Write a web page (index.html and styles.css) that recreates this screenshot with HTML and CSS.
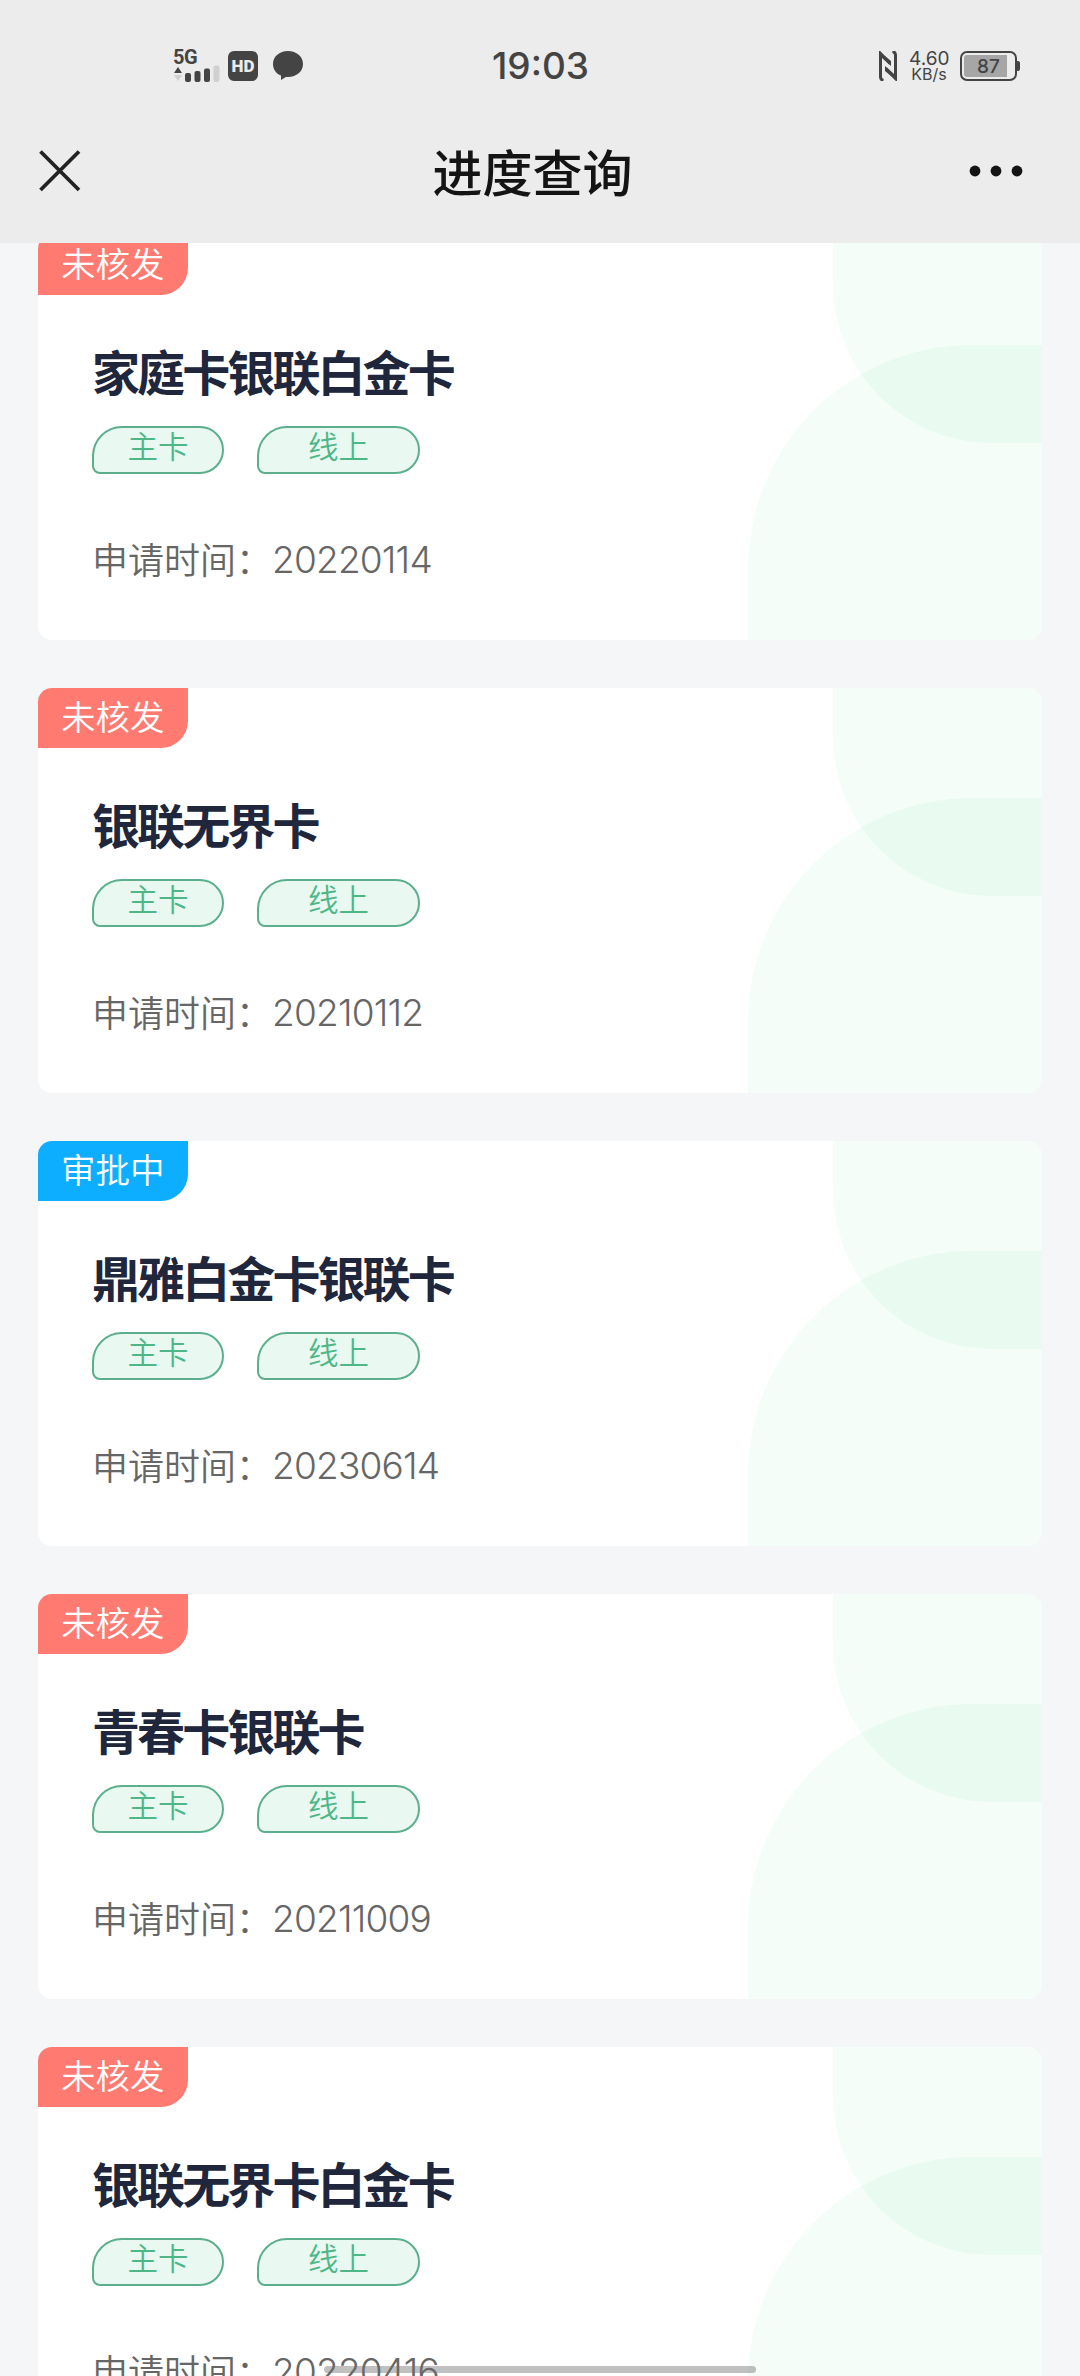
FILE: index.html
```html
<!DOCTYPE html>
<html lang="zh-CN">
<head>
<meta charset="utf-8">
<title>进度查询</title>
<link rel="stylesheet" href="styles.css">
</head>
<body>
<div class="screen">
  <header class="header">
    <div class="status">
      <div class="signal">
        <span class="net">5G</span>
        <svg width="48" height="18" viewBox="0 0 48 18">
          <path d="M1 8 5 2 9 8Z" fill="#444"/>
          <path d="M1 10 5 16 9 10Z" fill="#cfcfcf"/>
          <rect x="12" y="8" width="6" height="9" rx="2" fill="#444"/>
          <rect x="21.500" y="6" width="6" height="11" rx="2" fill="#444"/>
          <rect x="31" y="3.500" width="6" height="13.500" rx="2" fill="#444"/>
          <rect x="40.500" y="0.500" width="6" height="16.500" rx="2" fill="#d0d0d0"/>
        </svg>
      </div>
      <span class="hd">HD</span>
      <svg class="bubble" width="30" height="30" viewBox="0 0 30 30"><path d="M15 0C23.500 0 30 5.500 30 13S23.500 26 15 26C14 26 13.500 26 12.800 25.900L8 29V24.600C3 22.500 0 18.500 0 13 0 5.500 6.500 0 15 0Z" fill="#444"/></svg>
      <time class="clock">19:03</time>
      <svg class="nfc" width="18" height="30" viewBox="0 0 18 30"><path d="M4.500 29.500Q1.500 29 1.500 26V2.500L11 12.500M13.500.5Q16.500 1 16.500 4V27.500L7 17.500" fill="none" stroke="#444" stroke-width="3"/><path d="M0 0 12 10V15L3 7ZM18 30 6 20V15L15 23Z" fill="#444"/></svg>
      <div class="speed"><span class="rate">4.60</span><span class="unit">KB/s</span></div>
      <div class="battery"><div class="level"></div><span class="percent">87</span></div>
    </div>
    <nav class="nav">
      <svg width="42" height="42" viewBox="0 0 42 42"><path d="M1.500 1.500 40 40M40 1.500 1.500 40" stroke="#222" stroke-width="3.800"/></svg>
      <h1 class="title">进度查询</h1>
      <svg width="54" height="12" viewBox="0 0 54 12"><g fill="#141414"><circle cx="6" cy="6" r="5.400"/><circle cx="27" cy="6" r="5.400"/><circle cx="48" cy="6" r="5.400"/></g></svg>
    </nav>
  </header>
  <main class="list">
    <article class="card">
      <span class="badge">未核发</span>
      <h2 class="name">家庭卡银联白金卡</h2>
      <div class="tags"><span class="tag">主卡</span><span class="tag tag-wide">线上</span></div>
      <p class="date"><span class="label">申请时间：</span><span class="num">20220114</span></p>
    </article>
    <article class="card">
      <span class="badge">未核发</span>
      <h2 class="name">银联无界卡</h2>
      <div class="tags"><span class="tag">主卡</span><span class="tag tag-wide">线上</span></div>
      <p class="date"><span class="label">申请时间：</span><span class="num">20210112</span></p>
    </article>
    <article class="card">
      <span class="badge badge-pending">审批中</span>
      <h2 class="name">鼎雅白金卡银联卡</h2>
      <div class="tags"><span class="tag">主卡</span><span class="tag tag-wide">线上</span></div>
      <p class="date"><span class="label">申请时间：</span><span class="num">20230614</span></p>
    </article>
    <article class="card">
      <span class="badge">未核发</span>
      <h2 class="name">青春卡银联卡</h2>
      <div class="tags"><span class="tag">主卡</span><span class="tag tag-wide">线上</span></div>
      <p class="date"><span class="label">申请时间：</span><span class="num">20211009</span></p>
    </article>
    <article class="card">
      <span class="badge">未核发</span>
      <h2 class="name">银联无界卡白金卡</h2>
      <div class="tags"><span class="tag">主卡</span><span class="tag tag-wide">线上</span></div>
      <p class="date"><span class="label">申请时间：</span><span class="num">20220416</span></p>
    </article>
  </main>
  <div class="home-bar"></div>
</div>
</body>
</html>
```
FILE: styles.css
```css
* { box-sizing: border-box; margin: 0; padding: 0; }
body { background: #f4f6f8; font-family: "Noto Sans CJK SC", sans-serif; }
svg { display: block; flex: none; }

.screen { position: relative; width: 1080px; height: 2376px; overflow: hidden; }

.header { position: relative; z-index: 1; height: 243px; background: #ececec; }
.status {
  display: flex; align-items: center;
  height: 132px; padding: 0 60px 0 173px;
  font-family: Inter, sans-serif; color: #444;
}
.signal { flex: none; width: 48px; }
.net { display: block; font: bold 20px/16px Roboto, sans-serif; letter-spacing: -.5px; }
.hd {
  flex: none; width: 30px; height: 30px; margin-left: 7px; border-radius: 6px;
  background: #444; color: #ececec;
  font: 900 17px/30px Roboto, sans-serif; text-align: center;
}
.bubble { margin-left: 15px; }
.clock { flex: none; width: 100px; margin-left: 189px; font-size: 37px; line-height: 44px; font-weight: 450; white-space: nowrap; }
.nfc { margin-left: 287px; }
.speed { flex: none; display: flex; flex-direction: column; width: 40px; margin-left: 12px; text-align: center; }
.rate { font-size: 19px; line-height: 17px; }
.unit { font-size: 16px; line-height: 15px; }
.battery {
  flex: none; position: relative; width: 57px; height: 30px; margin-left: 11px; padding: 2px;
  border: 2px solid #444; border-radius: 7px;
}
.battery::after {
  content: ""; position: absolute; right: -5px; top: 8px;
  width: 3px; height: 10px; border-radius: 0 2px 2px 0; background: #444;
}
.level { width: 43px; height: 22px; border-radius: 3px 0 0 3px; background: #a6a6a6; }
.percent { position: absolute; inset: 0; font-size: 19px; line-height: 27px; font-weight: 450; text-align: center; }

.nav { display: flex; align-items: center; justify-content: space-between; height: 78px; padding: 0 57px 0 39px; }
.title { padding: 0 0 2px 15px; font-size: 50px; line-height: 76px; font-weight: 500; color: #141414; }

.list { display: flex; flex-direction: column; gap: 48px; margin-top: -8px; padding: 0 38px; }
.card {
  position: relative; flex: none; height: 405px; border-radius: 14px;
  background: #fff; overflow: hidden;
}
.card::before, .card::after { content: ""; position: absolute; right: 0; background: rgba(20, 210, 110, .047); }
.card::before { top: 0; width: 209px; height: 208px; border-bottom-left-radius: 159px; }
.card::after { bottom: 0; width: 294px; height: 295px; border-top-left-radius: 224px; }
.badge {
  display: block; width: 150px; height: 60px; padding-left: 23px;
  border-bottom-right-radius: 27px; background: #ff7b72; color: #fff;
  font-size: 34.5px; line-height: 55px; font-weight: 350;
}
.badge-pending { background: #0daeff; }
.name {
  margin: 40px 0 0 54px; color: #20263b;
  font-size: 48px; line-height: 70px; font-weight: 700; letter-spacing: -2.9px;
}
.tags { display: flex; gap: 33px; margin: 21px 0 0 54px; }
.tag {
  width: 132px; height: 48px; border: 2px solid #5baf8c;
  border-radius: 30px 24px 24px 8px; background: #e9f8f1; color: #4db788;
  font-size: 30.5px; line-height: 35px; font-weight: 350; text-align: center;
}
.tag-wide { width: 163px; }
.date { display: flex; margin: 60px 0 0 54px; color: #666; font-size: 36px; line-height: 52px; font-weight: 350; }
.label { margin-top: -2px; }
.num { font-family: Inter, sans-serif; font-size: 37px; letter-spacing: -.8px; }

.home-bar {
  position: absolute; z-index: 2; left: 324px; bottom: 3px;
  width: 432px; height: 7px; border-radius: 4px; background: rgba(110, 110, 110, .43);
}
```
